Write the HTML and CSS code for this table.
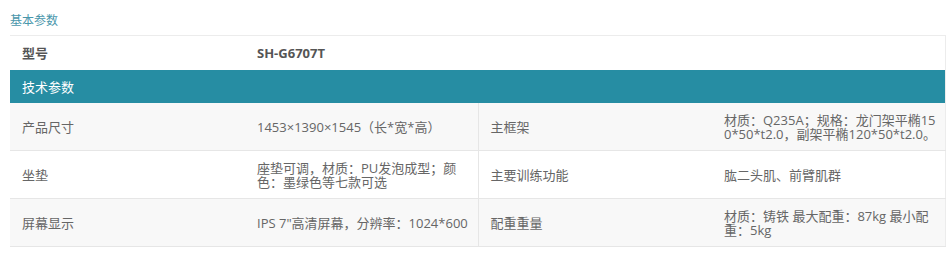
FILE: index.html
```html
<!DOCTYPE html>
<html lang="zh-CN">
<head>
<meta charset="utf-8">
<title>基本参数</title>
<link rel="stylesheet" href="styles.css">
</head>
<body>
<div class="wrap">
  <div class="title">基本参数</div>
  <table class="params">
    <colgroup>
      <col class="c1"><col class="c2"><col class="c3"><col class="c4">
    </colgroup>
    <tr class="model">
      <td>型号</td>
      <td colspan="3">SH-G6707T</td>
    </tr>
    <tr class="head">
      <td colspan="4">技术参数</td>
    </tr>
    <tr class="row alt">
      <td>产品尺寸</td>
      <td class="split">1453×1390×1545（长*宽*高）</td>
      <td>主框架</td>
      <td class="last">材质：Q235A；规格：龙门架平椭150*50*t2.0，副架平椭120*50*t2.0。</td>
    </tr>
    <tr class="row">
      <td>坐垫</td>
      <td class="split">座垫可调，材质：PU发泡成型；颜色：墨绿色等七款可选</td>
      <td>主要训练功能</td>
      <td class="last">肱二头肌、前臂肌群</td>
    </tr>
    <tr class="row alt">
      <td>屏幕显示</td>
      <td class="split loose">IPS 7"高清屏幕，分辨率：1024*600</td>
      <td>配重重量</td>
      <td class="last">材质：铸铁 最大配重：87kg 最小配重：5kg</td>
    </tr>
  </table>
</div>
</body>
</html>
```

FILE: styles.css
```css
html, body {
  margin: 0;
  padding: 0;
  background: #ffffff;
}

body {
  font-family: "Open Sans", "Noto Sans CJK SC", sans-serif;
  color: #666666;
}

.wrap {
  padding: 0 5px 0 10px;
}

.title {
  height: 35px;
  box-sizing: border-box;
  padding-top: 13px;
  font-size: 12px;
  line-height: 16px;
  color: #4996ab;
}

.params {
  width: 935px;
  border-collapse: collapse;
  table-layout: fixed;
  border-right: 1px solid #ececec;
}

.c1 { width: 235px; }
.c2 { width: 233px; }
.c3 { width: 234px; }
.c4 { width: 233px; }

.params td {
  padding: 0 12px;
  font-size: 13px;
  line-height: 14px;
  vertical-align: middle;
  word-break: break-all;
}

.model td {
  height: 34px;
  border-top: 1px solid #ececec;
  font-weight: bold;
  color: #555555;
  background: #ffffff;
}

.head td {
  height: 33px;
  background: #268da3;
  color: #ffffff;
  font-size: 13px;
}

.row td {
  height: 47px;
  border-bottom: 1px solid #e6e6e6;
  background: #ffffff;
}

.row.alt td {
  background: #f8f8f8;
}

.row td.split {
  padding-right: 10px;
  border-right: 1px solid #e6e6e6;
}

.row td.last {
  padding-right: 7px;
}

.row td.split.loose {
  padding-right: 2px;
}
```
